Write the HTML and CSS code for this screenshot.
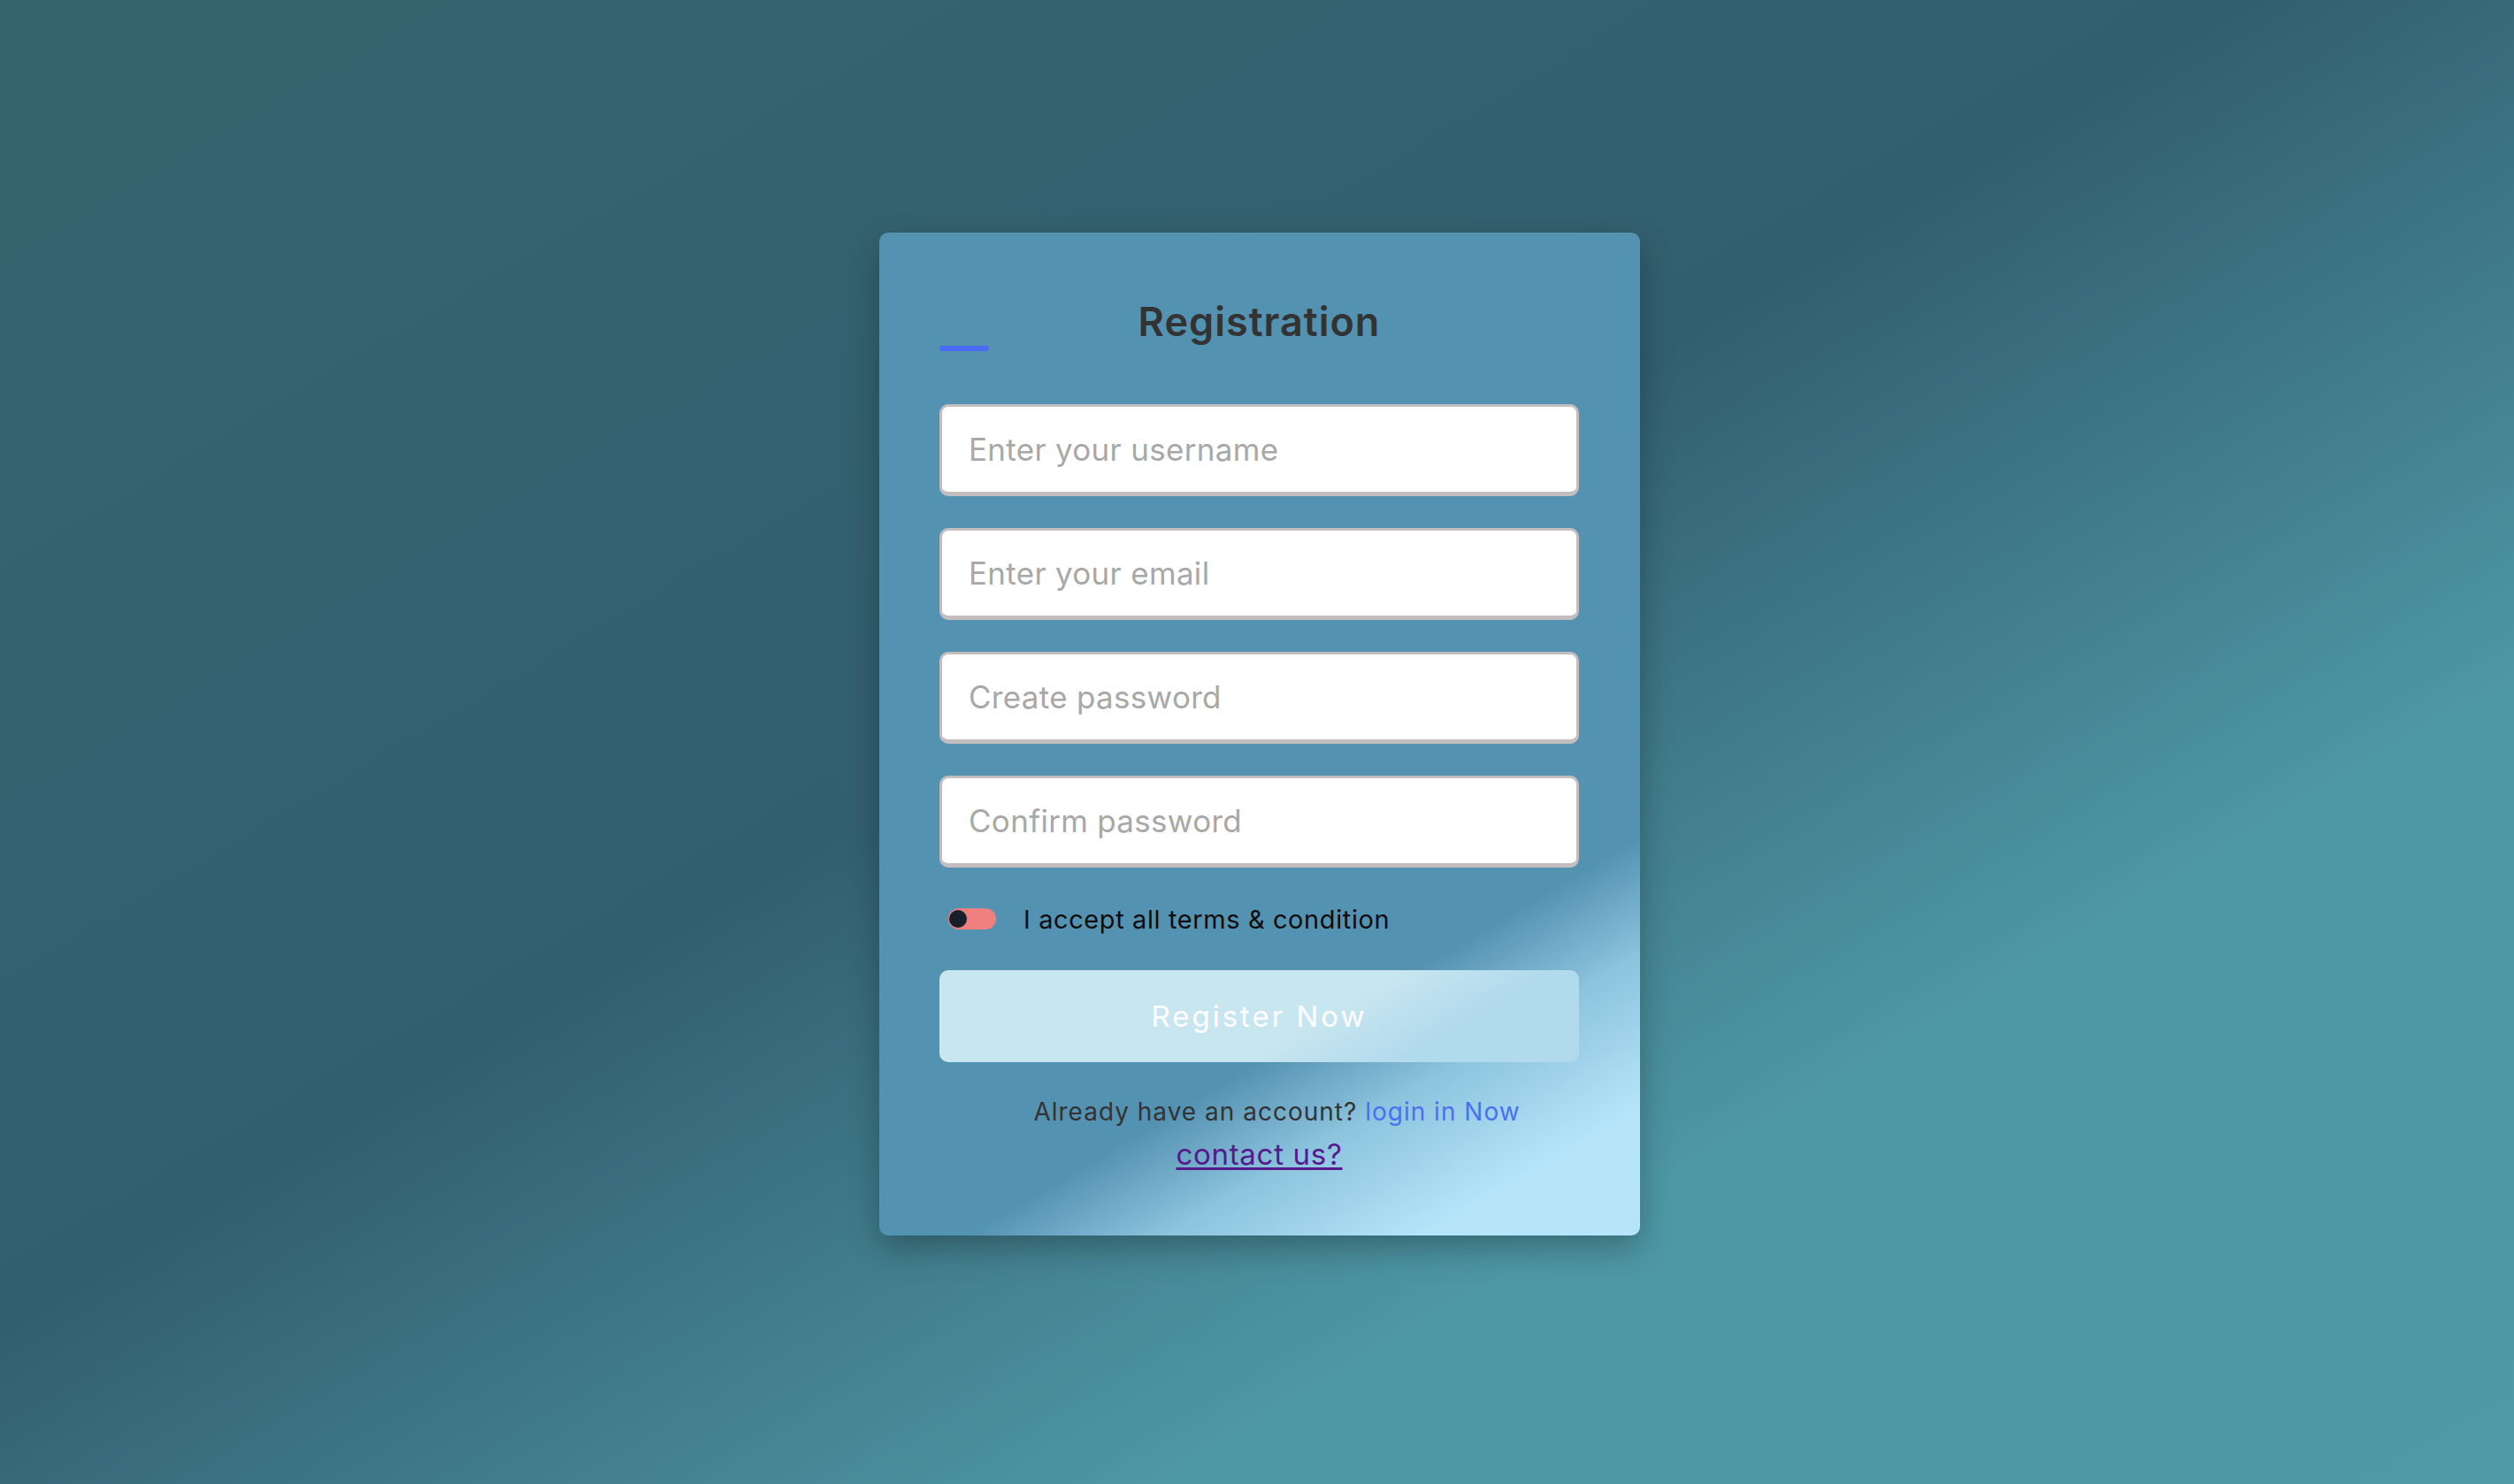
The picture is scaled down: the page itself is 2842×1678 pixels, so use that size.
FILE: index.html
```html
<!DOCTYPE html>
<html lang="en">
<head>
<meta charset="utf-8">
<title>Registration</title>
<link rel="stylesheet" href="styles.css">
</head>
<body>
  <div class="card">
    <h2 class="title">Registration</h2>
    <form class="form">
      <input class="field" type="text" placeholder="Enter your username">
      <input class="field" type="text" placeholder="Enter your email">
      <input class="field" type="password" placeholder="Create password">
      <input class="field" type="password" placeholder="Confirm password">
      <label class="terms">
        <input class="toggle" type="checkbox">
        <span class="terms-text">I accept all terms &amp; condition</span>
      </label>
      <button class="submit" type="button">Register Now</button>
    </form>
    <div class="footer">
      <p class="login">Already have an account? <a class="login-link" href="#">login in Now</a></p>
      <a class="contact" href="#">contact us?</a>
    </div>
  </div>
</body>
</html>
```

FILE: styles.css
```css
* { box-sizing: border-box; }

html, body { height: 100%; }

body {
  margin: 0;
  min-height: 100vh;
  display: flex;
  align-items: center;
  justify-content: center;
  padding: 0 0 18px 6px;
  font-family: "Inter", "Liberation Sans", sans-serif;
  background: linear-gradient(to bottom right, #37656f 0%, #325f6f 45%, #4e97a5 73%, #4f9aa8 100%);
  background-attachment: fixed;
}

.card {
  width: 860px;
  padding: 73px 69px 68px 68px;
  border-radius: 10px;
  background: linear-gradient(to bottom right, #5492b2 60.8%, #8cc3dd 64.8%, #b6e5fa 70%);
  background-attachment: fixed;
  box-shadow: 0 14px 36px rgba(0, 0, 0, 0.28);
}

.title {
  position: relative;
  margin: 0;
  padding-bottom: 5px;
  font-size: 45px;
  line-height: 56px;
  font-weight: 600;
  letter-spacing: 1px;
  color: #333;
  text-align: center;
}

.title::before {
  content: "";
  position: absolute;
  left: 0;
  bottom: 0;
  width: 56px;
  height: 6px;
  border-radius: 3px;
  background: #4a6cf2;
}

.form {
  margin: 60px 0 0;
  display: flex;
  flex-direction: column;
}

.field {
  display: block;
  width: 100%;
  height: 104px;
  margin: 0 0 36px;
  padding: 0 30px;
  border: 3px solid #c4bdbd;
  border-bottom-width: 5px;
  border-radius: 10px;
  background: #fff;
  font-family: inherit;
  font-size: 35px;
  letter-spacing: 0.3px;
  color: #333;
  outline: none;
}

.field:last-of-type { margin-bottom: 0; }

.field::placeholder { color: #a8a8a8; }

.terms {
  display: flex;
  align-items: center;
  height: 24px;
  margin-top: 46px;
  padding-left: 10px;
}

.toggle {
  appearance: none;
  -webkit-appearance: none;
  position: relative;
  width: 54px;
  height: 24px;
  margin: 0 31px 0 0;
  border-radius: 12px;
  background: #f08080;
  flex: none;
}

.toggle::before {
  content: "";
  position: absolute;
  left: 1px;
  top: 2px;
  width: 20px;
  height: 20px;
  border-radius: 50%;
  background: #17202a;
  box-shadow: 0 0 0 1px #e77a7a;
}

.terms-text {
  font-size: 29px;
  letter-spacing: 0.6px;
  color: #120c0c;
  white-space: nowrap;
}

.submit {
  display: block;
  width: 100%;
  height: 104px;
  margin-top: 46px;
  border: 0;
  border-radius: 10px;
  background: linear-gradient(to bottom right, #c8e6f0 60.5%, #b2daed 63.5%, #a9d6ec 100%);
  background-attachment: fixed;
  font-family: inherit;
  font-size: 33px;
  font-weight: 400;
  letter-spacing: 3px;
  color: #fff;
}

.footer {
  margin-top: 32px;
  text-align: center;
}

.login {
  margin: 0;
  padding-left: 40px;
  font-size: 28px;
  line-height: 48px;
  letter-spacing: 1px;
  color: #333;
}

.login-link {
  color: #4a70f2;
  text-decoration: none;
}

.contact {
  display: inline-block;
  font-size: 33px;
  line-height: 48px;
  letter-spacing: 0.7px;
  color: #551a8b;
  text-decoration: underline;
  text-underline-offset: 3px;
}
```
